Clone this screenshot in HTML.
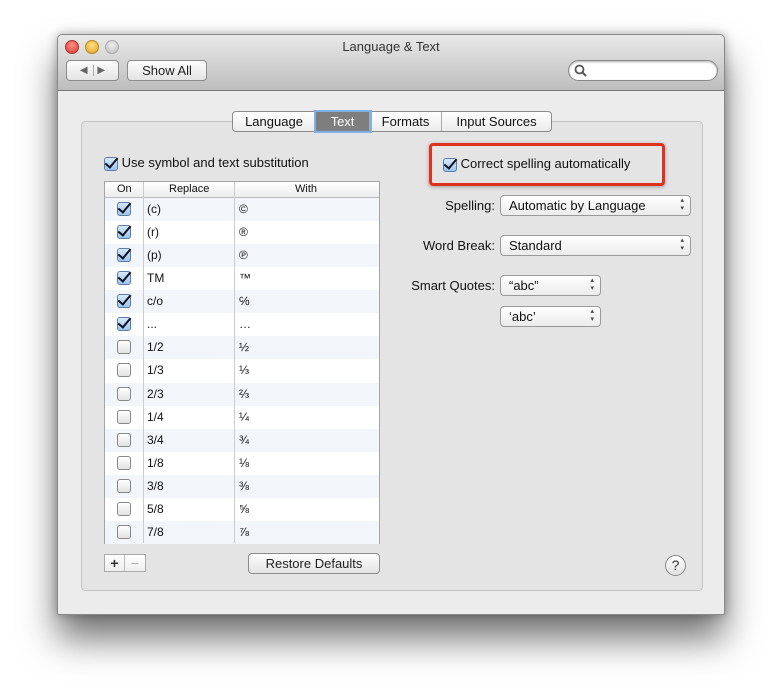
<!DOCTYPE html>
<html><head><meta charset="utf-8"><style>
*{box-sizing:border-box;margin:0;padding:0}
body{width:782px;height:695px;background:#fff;position:relative;font-family:"Liberation Sans",sans-serif;font-size:13px;color:#111;overflow:hidden}
.win{position:absolute;left:57px;top:34px;width:668px;height:581px;background:#ececec;border:1px solid #8a8a8a;border-radius:5px 5px 2px 2px;box-shadow:0 24px 36px rgba(0,0,0,.55),0 0 10px rgba(0,0,0,.3)}
.tb{position:absolute;left:0;top:0;width:666px;height:56px;background:linear-gradient(#e9e9e9,#cfcfcf 60%,#bdbdbd);border-bottom:1px solid #777;border-radius:4px 4px 0 0}
.dot{position:absolute;top:5px;width:14px;height:14px;border-radius:50%}
.title{position:absolute;top:4px;left:0;width:666px;text-align:center;color:#333;font-size:13px}
.btn{position:absolute;background:linear-gradient(#fdfdfd,#e4e4e4);border:1px solid #8c8c8c;border-radius:4px;text-align:center;color:#222}
.search{position:absolute;left:510px;top:25px;width:150px;height:21px;background:#fff;border:1px solid #888;border-radius:11px;box-shadow:inset 0 1px 2px rgba(0,0,0,.3)}
.box{position:absolute;left:23px;top:86px;width:622px;height:470px;background:#e4e4e4;border:1px solid #c4c4c4;border-radius:4px}
.tabs{position:absolute;left:174px;top:76px;height:21px;display:flex;border:1px solid #8c8c8c;border-radius:4px;background:linear-gradient(#fff,#ececec)}
.tabs div{line-height:19px;border-right:1px solid #aaa;font-size:13px;text-align:center}
.tabs div:last-child{border-right:none}
.tabs .sel{background:#7e7e7e;color:#fff;box-shadow:0 0 0 2px #7fb0e6}
.cb{display:inline-block;width:14px;height:14px;border:1px solid #888;border-radius:3px;background:linear-gradient(#fff,#e2e2e2);vertical-align:middle;position:relative}
.cb.on{background:linear-gradient(#d6e9fb,#9cc4ef);border-color:#5b7ea8}
.cb.on::after{content:"";position:absolute;left:3px;top:-3px;width:5px;height:11px;border:solid #112;border-width:0 2.5px 2.5px 0;transform:rotate(40deg)}
.tbl{position:absolute;left:46px;top:146px;width:276px;height:363px;background:#fff;border:1px solid #a5a5a5}
.hdr{height:16px;border-bottom:1px solid #bbb;background:linear-gradient(#fff,#ececec);font-size:11px;position:relative;line-height:15px}
.hdr span,.row span{position:absolute;top:0}
.row{height:23.07px;position:relative;font-size:12px;line-height:23px}
.row:nth-child(odd){background:#f2f5f9}
.vl{position:absolute;top:0;bottom:0;width:1px;background:#ccc}
.pop{position:absolute;height:21px;background:linear-gradient(#fff,#ececec);border:1px solid #9a9a9a;border-radius:4px;line-height:19px;padding-left:8px;font-size:13px}
.pop::after{content:"▴\A▾";white-space:pre;position:absolute;right:6px;top:1px;font-size:7px;line-height:8px;color:#444}
.lbl{position:absolute;text-align:right;width:120px;font-size:13px}
</style></head><body>
<div class="win">
 <div class="tb">
  <div class="dot" style="left:7px;background:radial-gradient(circle at 50% 35%,#ff8f86,#d9392c);border:1px solid #a33"></div>
  <div class="dot" style="left:27px;background:radial-gradient(circle at 50% 35%,#ffe08a,#e1a21c);border:1px solid #b82"></div>
  <div class="dot" style="left:47px;background:radial-gradient(circle at 50% 35%,#eee,#bbb);border:1px solid #aaa"></div>
  <div class="title">Language &amp; Text</div>
  <div class="btn" style="left:8px;top:25px;width:53px;height:21px;font-size:10px;line-height:19px;color:#666">◀ <span style="border-left:1px solid #aaa;margin:0 3px"></span> ▶</div>
  <div class="btn" style="left:69px;top:25px;width:80px;height:21px;line-height:19px;font-size:13px">Show All</div>
  <div class="search"><svg width="16" height="16" style="position:absolute;left:4px;top:2px"><circle cx="6.5" cy="6.5" r="4" fill="none" stroke="#555" stroke-width="1.8"/><line x1="9.5" y1="9.5" x2="13" y2="13" stroke="#555" stroke-width="2"/></svg></div>
 </div>
 <div class="box"></div>
 <div class="tabs"><div style="width:83px">Language</div><div class="sel" style="width:54px">Text</div><div style="width:72px">Formats</div><div style="width:109px">Input Sources</div></div>
 <div style="position:absolute;left:46px;top:120px;font-size:13px"><span class="cb on"></span> Use symbol and text substitution</div>
 <div class="tbl">
  <div class="hdr"><span style="left:12px">On</span><span style="left:64px">Replace</span><span style="left:190px">With</span></div>
  <div>
   <div class="row"><span style="left:12px;top:4px" class="cb on"></span><span style="left:42px">(c)</span><span style="left:134px">©</span></div>
   <div class="row"><span style="left:12px;top:4px" class="cb on"></span><span style="left:42px">(r)</span><span style="left:134px">®</span></div>
   <div class="row"><span style="left:12px;top:4px" class="cb on"></span><span style="left:42px">(p)</span><span style="left:134px">℗</span></div>
   <div class="row"><span style="left:12px;top:4px" class="cb on"></span><span style="left:42px">TM</span><span style="left:134px">™</span></div>
   <div class="row"><span style="left:12px;top:4px" class="cb on"></span><span style="left:42px">c/o</span><span style="left:134px">℅</span></div>
   <div class="row"><span style="left:12px;top:4px" class="cb on"></span><span style="left:42px">...</span><span style="left:134px">…</span></div>
   <div class="row"><span style="left:12px;top:4px" class="cb"></span><span style="left:42px">1/2</span><span style="left:134px">½</span></div>
   <div class="row"><span style="left:12px;top:4px" class="cb"></span><span style="left:42px">1/3</span><span style="left:134px">⅓</span></div>
   <div class="row"><span style="left:12px;top:4px" class="cb"></span><span style="left:42px">2/3</span><span style="left:134px">⅔</span></div>
   <div class="row"><span style="left:12px;top:4px" class="cb"></span><span style="left:42px">1/4</span><span style="left:134px">¼</span></div>
   <div class="row"><span style="left:12px;top:4px" class="cb"></span><span style="left:42px">3/4</span><span style="left:134px">¾</span></div>
   <div class="row"><span style="left:12px;top:4px" class="cb"></span><span style="left:42px">1/8</span><span style="left:134px">⅛</span></div>
   <div class="row"><span style="left:12px;top:4px" class="cb"></span><span style="left:42px">3/8</span><span style="left:134px">⅜</span></div>
   <div class="row"><span style="left:12px;top:4px" class="cb"></span><span style="left:42px">5/8</span><span style="left:134px">⅝</span></div>
   <div class="row"><span style="left:12px;top:4px" class="cb"></span><span style="left:42px">7/8</span><span style="left:134px">⅞</span></div>
  </div>
  <div class="vl" style="left:38px"></div><div class="vl" style="left:129px"></div>
 </div>
 <div style="position:absolute;left:46px;top:519px;width:42px;height:18px;border:1px solid #aaa;background:linear-gradient(#fff,#eee);display:flex;font-size:14px;line-height:16px">
  <div style="width:20px;text-align:center;border-right:1px solid #bbb;font-weight:bold;color:#333">+</div><div style="width:20px;text-align:center;color:#aaa">−</div></div>
 <div class="btn" style="left:190px;top:518px;width:132px;height:21px;line-height:19px;font-size:13px">Restore Defaults</div>
 <div style="position:absolute;left:607px;top:520px;width:21px;height:21px;border-radius:50%;border:1px solid #888;background:linear-gradient(#fff,#e0e0e0);text-align:center;line-height:19px;font-size:14px;color:#333">?</div>
 <div style="position:absolute;left:371px;top:108px;width:236px;height:43px;border:3px solid #e0301e;border-radius:4px;box-shadow:0 1px 4px rgba(0,0,0,.3)"></div>
 <div style="position:absolute;left:385px;top:121px;font-size:13px"><span class="cb on"></span> Correct spelling automatically</div>
 <div class="lbl" style="left:317px;top:163px">Spelling:</div>
 <div class="pop" style="left:442px;top:160px;width:191px">Automatic by Language</div>
 <div class="lbl" style="left:317px;top:203px">Word Break:</div>
 <div class="pop" style="left:442px;top:200px;width:191px">Standard</div>
 <div class="lbl" style="left:317px;top:243px">Smart Quotes:</div>
 <div class="pop" style="left:442px;top:240px;width:101px">“abc”</div>
 <div class="pop" style="left:442px;top:271px;width:101px">‘abc’</div>
</div>
</body></html>
